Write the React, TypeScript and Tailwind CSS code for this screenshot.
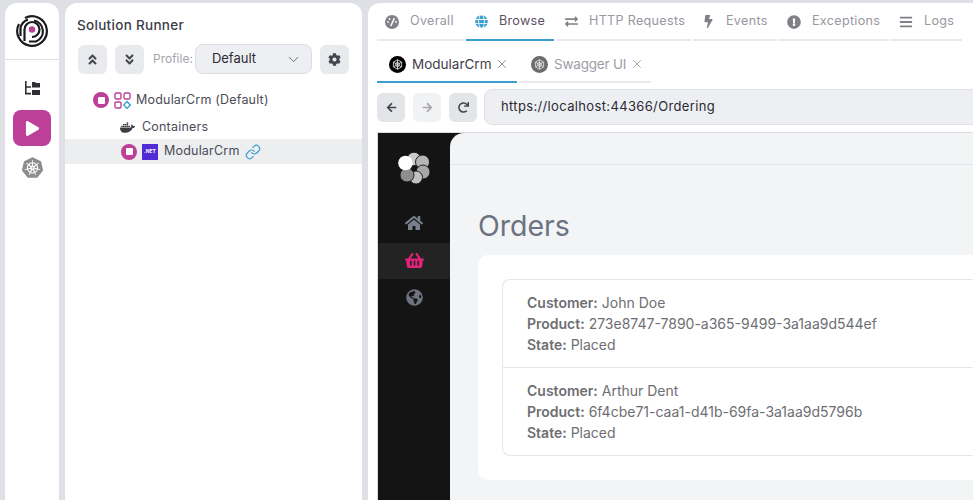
import type { ReactNode } from 'react';
import {
  FaAngleDoubleDown,
  FaAngleDoubleUp,
  FaArrowLeft,
  FaArrowRight,
  FaBars,
  FaBolt,
  FaCog,
  FaDocker,
  FaExchangeAlt,
  FaExclamationCircle,
  FaGlobe,
  FaGlobeAmericas,
  FaHome,
  FaPlay,
  FaRedo,
  FaShoppingBasket,
} from 'react-icons/fa';
import { SiKubernetes } from 'react-icons/si';
import { ChevronDown, Link, X } from 'lucide-react';

function GaugeIcon() {
  return (
    <svg width="14" height="14" viewBox="0 0 14 14">
      <circle cx="7" cy="7" r="7" fill="#808087" />
      <path d="M6 10.500 9.200 3.600" stroke="#fff" strokeWidth="1.5" strokeLinecap="round" />
      <circle cx="3" cy="7" r="0.9" fill="#fff" />
      <circle cx="4.500" cy="4" r="0.9" fill="#fff" />
      <circle cx="11" cy="7" r="0.9" fill="#fff" />
    </svg>
  );
}

const mainTabs = [
  { label: 'Overall', icon: <GaugeIcon />, width: 'w-[87px]' },
  { label: 'Browse', icon: <FaGlobe size={13} className="text-[#3a9fcf]" />, width: 'w-[88px]', active: true },
  { label: 'HTTP Requests', icon: <FaExchangeAlt size={13} />, width: 'w-[135px]' },
  { label: 'Events', icon: <FaBolt size={13} />, width: 'w-[84px]' },
  { label: 'Exceptions', icon: <FaExclamationCircle size={14} />, width: 'w-[110px]' },
  { label: 'Logs', icon: <FaBars size={14} />, width: 'w-[71px]' },
];

const orders = [
  { customer: 'John Doe', product: '273e8747-7890-a365-9499-3a1aa9d544ef' },
  { customer: 'Arthur Dent', product: '6f4cbe71-caa1-d41b-69fa-3a1aa9d5796b' },
];

function AppLogo() {
  return (
    <svg width="32" height="32" viewBox="0 0 32 32" fill="none" stroke="#1a1a1e">
      <path d="M9 3A14.800 14.800 0 1 1 3 9" strokeWidth="2.2" />
      <path d="M4.500 21V13A11.500 11.500 0 0 1 12 4.500" strokeWidth="2.200" />
      <path d="M8.500 26V14.500A7.500 7.500 0 1 1 16 22" strokeWidth="2.200" />
      <path d="M18 5.500A11 11 0 0 1 20 26.500H13" strokeWidth="2.200" />
      <circle cx="16" cy="14.500" r="3.200" fill="#bd3f97" stroke="none" />
    </svg>
  );
}

function IframeLogo() {
  return (
    <svg width="32" height="32" viewBox="0 0 32 32" stroke="#141414" strokeWidth="0.9">
      <circle cx="16" cy="7" r="6.800" fill="#c9c9c9" />
      <circle cx="24.500" cy="10" r="7" fill="#b5b5b5" />
      <circle cx="25" cy="20" r="7" fill="#a8a8a8" />
      <circle cx="18" cy="25.500" r="6.500" fill="#c2c2c2" />
      <circle cx="9" cy="23" r="7" fill="#8e8e8e" />
      <circle cx="7.500" cy="11" r="7.300" fill="#ffffff" stroke="none" />
    </svg>
  );
}

function WebIcon() {
  return (
    <svg width="11" height="11" viewBox="0 0 12 12" fill="none" stroke="#e6e6e6" strokeWidth="0.9">
      <path d="M6 0.800 10.500 3.400V8.600L6 11.200 1.500 8.600V3.400Z" />
      <path d="M6 0.800V11.200M1.500 3.400 10.500 8.600M10.500 3.400 1.500 8.600" />
      <circle cx="6" cy="6" r="2.200" />
    </svg>
  );
}

function SolutionIcon() {
  return (
    <svg width="17" height="17" viewBox="0 0 17 17" fill="none" strokeWidth="1.4">
      <rect x="1" y="1" width="6" height="6" rx="1.3" stroke="#bd3f97" />
      <rect x="10" y="1" width="6" height="6" rx="1.3" stroke="#bd3f97" />
      <rect x="1" y="10" width="6" height="6" rx="1.3" stroke="#bd3f97" />
      <path d="M13 9.500 16.200 13 13 16.400 9.800 13Z" stroke="#3a9fcf" />
    </svg>
  );
}

function StopButton() {
  return (
    <span className="flex h-4 w-4 shrink-0 items-center justify-center rounded-full bg-[#bd3f97]">
      <span className="h-[7px] w-[7px] rounded-[1px] bg-white" />
    </span>
  );
}

function IconButton({ children, className = '' }: { children: ReactNode; className?: string }) {
  return (
    <button type="button" className={`flex h-[29px] w-[29px] shrink-0 items-center justify-center rounded-md bg-[#e9eaee] text-[#45454d] ${className}`}>
      {children}
    </button>
  );
}

function AppBadge({ dim }: { dim?: boolean }) {
  return (
    <span className={`flex h-[17px] w-[17px] shrink-0 items-center justify-center rounded-full ${dim ? 'bg-[#6d6d6d]' : 'bg-black'}`}>
      <WebIcon />
    </span>
  );
}

function NavButton({ children, dim }: { children: ReactNode; dim?: boolean }) {
  return (
    <button type="button" className={`flex h-[29px] w-[28px] shrink-0 items-center justify-center rounded-md ${dim ? 'bg-[#f1f2f4] text-[#a5a5ab]' : 'bg-[#e4e5e9] text-[#45454d]'}`}>
      {children}
    </button>
  );
}

export default function App() {
  return (
    <div className="flex h-[500px] w-[973px] gap-[6px] overflow-hidden bg-[#dfe0e5] pl-[5px] pt-[3px] font-['Inter',sans-serif] text-[#4b4b57]">
      {/* left rail */}
      <aside className="flex w-[54px] shrink-0 flex-col items-center rounded-t-xl bg-white">
        <div className="flex h-[57px] w-full items-center justify-center border-b border-[#dfe0e5]">
          <AppLogo />
        </div>
        <div className="mt-[18px] flex h-[21px] items-center text-[#2e2e34]">
          <svg width="17" height="15" viewBox="0 0 17 15" fill="currentColor">
            <path d="M1 0h1.600v5.200H7v1.600H2.600v5H7v1.600H1Z" />
            <path d="M8 1h3l1 1h4v4.500H8ZM8 9h8v5H8Z" />
          </svg>
        </div>
        <div className="mt-[11px] flex h-9 w-[38px] items-center justify-center rounded-lg bg-[#bd3f97] text-white">
          <FaPlay size={15} />
        </div>
        <SiKubernetes size={21} className="mt-[11px] text-[#8d8d8d]" />
      </aside>

      {/* solution runner */}
      <section className="w-[297px] shrink-0 rounded-t-xl bg-white">
        <h2 className="pl-3 pt-[14px] text-[13.500px] leading-[16px] font-medium tracking-[0.3px] text-[#3c3c46]">Solution Runner</h2>
        <div className="mt-[11px] flex items-center pl-[13px]">
          <IconButton><FaAngleDoubleUp size={13} /></IconButton>
          <IconButton className="ml-[8px]"><FaAngleDoubleDown size={13} /></IconButton>
          <span className="ml-[9px] text-xs text-[#a9a3ae]">Profile:</span>
          <div className="ml-[2px] flex h-[30px] w-[117px] items-center justify-between rounded-lg border border-[#dcdde2] bg-[#eeeff2] pl-4 pr-[9px] text-[13px] text-[#2b2b33]">
            Default
            <ChevronDown size={17} strokeWidth={1.2} className="text-[#55555c]" />
          </div>
          <IconButton className="ml-[8px]"><FaCog size={13} /></IconButton>
        </div>
        <div className="mt-[14px] flex h-[24px] items-center gap-[5px] pl-[28px] text-[12.500px]">
          <StopButton />
          <SolutionIcon />
          <span className="tracking-[0.2px]">ModularCrm (Default)</span>
        </div>
        <div className="mt-[3px] flex h-[24px] items-center gap-[7px] pl-[55px] text-[12.500px]">
          <FaDocker size={15} className="text-[#3c3c42]" />
          <span className="tracking-[0.2px]">Containers</span>
        </div>
        <div className="flex h-[25px] items-center gap-[5px] bg-[#edeef0] pl-[56px] text-[12.500px]">
          <StopButton />
          <span className="flex h-4 w-4 shrink-0 items-center justify-center bg-[#512bd4] text-[5px] font-bold text-white">.NET</span>
          <span className="ml-[1px] tracking-[0.2px]">ModularCrm</span>
          <Link size={16} strokeWidth={1.8} className="text-[#3a9fcf]" />
        </div>
      </section>

      {/* main panel */}
      <main className="flex min-w-0 flex-1 flex-col overflow-hidden rounded-tl-xl bg-white pl-[9px]">
        <nav className="flex h-[38px] shrink-0 gap-[2px] text-[12.600px] text-[#9a96a2]">
          {mainTabs.map((tab) => (
            <div key={tab.label} className={`flex shrink-0 items-center gap-[11px] border-b-2 pl-[8px] pt-[1px] ${tab.width} ${tab.active ? 'border-[#3a9fcf] text-[#5c5266]' : 'border-[#e8e9ee]'}`}>
              <span className="flex w-[14px] justify-center text-[#808087]">{tab.icon}</span>
              <span className="whitespace-nowrap tracking-[0.3px]">{tab.label}</span>
            </div>
          ))}
        </nav>
        <div className="mt-[2px] flex h-[40px] shrink-0 gap-[2px] text-[13.500px]">
          <div className="flex w-[140px] shrink-0 items-center gap-[6px] border-b-2 border-[#3a9fcf] pl-[12px] pt-[4px] text-[#3f3f4a]">
            <AppBadge />
            <span className="whitespace-nowrap">ModularCrm</span>
            <X size={14} strokeWidth={1.4} className="ml-[-2px] text-[#77777d]" />
          </div>
          <div className="flex w-[132px] shrink-0 items-center gap-[6px] border-b-2 border-[#e8e9ee] pl-[12px] pt-[4px] text-[#a09ca6]">
            <AppBadge dim />
            <span className="whitespace-nowrap tracking-[-0.2px]">Swagger UI</span>
            <X size={14} strokeWidth={1.4} className="ml-[-2px] text-[#95959a]" />
          </div>
        </div>
        <div className="mt-[6px] flex h-[36px] shrink-0 items-center">
          <NavButton><FaArrowLeft size={11} /></NavButton>
          <div className="ml-[8px]"><NavButton dim><FaArrowRight size={11} /></NavButton></div>
          <div className="ml-[8px]"><NavButton><FaRedo size={11} /></NavButton></div>
          <div className="ml-[7px] flex h-[36px] w-[520px] shrink-0 items-center rounded-l-lg border border-[#e0e1e5] bg-[#eeeff2] pl-4 text-[13px] tracking-[0.35px] text-[#2b2b33]">
            https://localhost:44366/Ordering
          </div>
        </div>

        {/* embedded page */}
        <div className="mt-[7px] flex min-h-0 w-[620px] flex-1 border-l border-t border-[#dcdce4] bg-[#141414]">
          <div className="flex w-[72px] shrink-0 flex-col items-center pt-[19px]">
            <IframeLogo />
            <FaHome size={18} className="mt-[30px] text-[#7a7f8c]" />
            <div className="mt-[11px] flex h-9 w-full items-center justify-center bg-[#232323] pb-[2px]">
              <FaShoppingBasket size={19} className="text-[#e0227b]" />
            </div>
            <FaGlobeAmericas size={17} className="mt-[10px] text-[#6f7380]" />
          </div>
          <div className="min-w-0 flex-1 rounded-tl-[14px] bg-[#f3f4f6]">
            <div className="h-[32px] border-b border-[#e5e7eb]" />
            <h1 className="pl-[28px] pt-[43px] text-[28.500px] leading-[36px] text-[#6b7280]">Orders</h1>
            <div className="ml-[28px] mt-[11px] rounded-l-[10px] bg-white pb-[24px] pl-[24px] pt-[24px]">
              <div className="rounded-l-lg border border-r-0 border-[#e5e7eb] text-sm leading-[21px] text-[#6e6e73]">
                {orders.map((order, i) => (
                  <div key={order.customer} className={`px-6 py-[12px] ${i > 0 ? 'border-t border-[#e5e7eb]' : ''}`}>
                    <div><b className="font-semibold">Customer:</b> {order.customer}</div>
                    <div><b className="font-semibold">Product:</b> {order.product}</div>
                    <div><b className="font-semibold">State:</b> Placed</div>
                  </div>
                ))}
              </div>
            </div>
          </div>
        </div>
      </main>
    </div>
  );
}
